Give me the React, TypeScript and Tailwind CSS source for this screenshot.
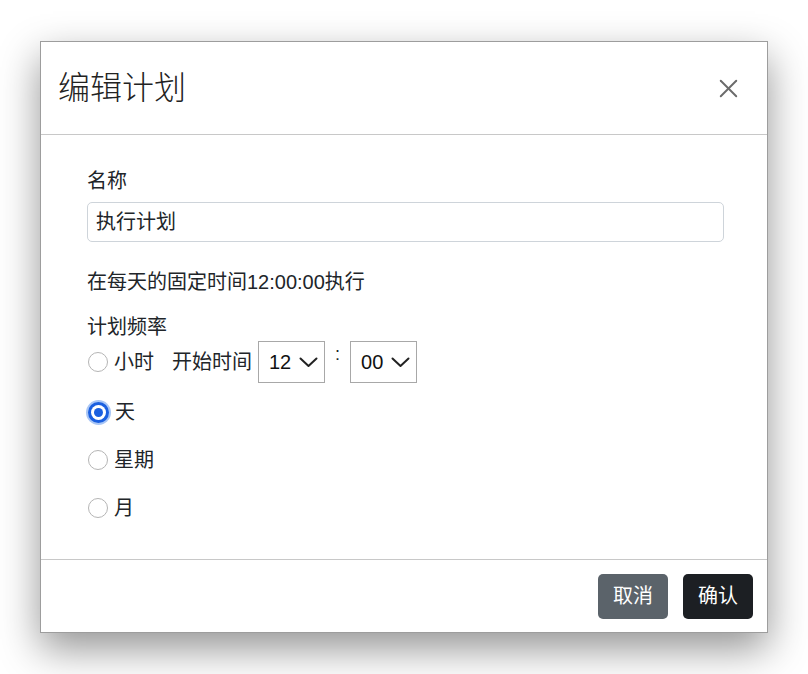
import { X } from "lucide-react";

const font = "font-['Liberation_Sans','Noto_Sans_CJK_SC',sans-serif]";

function Radio({ checked }: { checked?: boolean }) {
  if (checked) {
    return (
      <span className="flex h-[21px] w-[21px] shrink-0 items-center justify-center rounded-full bg-[#1a5fe0] ring-[2px] ring-[#a9c6f5]">
        <span className="flex h-[15px] w-[15px] items-center justify-center rounded-full bg-white">
          <span className="h-[9px] w-[9px] rounded-full bg-[#1a5fe0]" />
        </span>
      </span>
    );
  }
  return (
    <span className="h-[20px] w-[20px] shrink-0 rounded-full border border-[#b5b5b5] bg-white" />
  );
}

function Chevron() {
  return (
    <svg width="19" height="11" viewBox="0 0 19 11" fill="none">
      <polyline
        points="1.5,1.5 9.5,9 17.5,1.5"
        stroke="#222"
        strokeWidth="2"
        strokeLinecap="round"
        strokeLinejoin="round"
      />
    </svg>
  );
}

function TimeSelect({ value }: { value: string }) {
  return (
    <div className="flex h-[42px] w-[67px] items-center justify-between border border-[#a8a8a8] bg-white pl-[10px] pr-[6px] text-[20px] text-[#111]">
      <span>{value}</span>
      <Chevron />
    </div>
  );
}

function OptionRow({ label, checked }: { label: string; checked?: boolean }) {
  return (
    <div className="flex h-[48px] items-center gap-[5px] pl-[1px]">
      <Radio checked={checked} />
      <span className="ml-[1px]">{label}</span>
    </div>
  );
}

export default function App() {
  return (
    <div className={`min-h-[674px] w-[808px] bg-white pl-[40px] pt-[41px] ${font}`}>
      <div className="flex w-[728px] flex-col border border-[#9d9d9d] bg-white text-[20px] text-[#212529] shadow-[0_16px_38px_rgba(0,0,0,0.42)]">
        {/* header */}
        <div className="flex h-[93px] items-center justify-between border-b border-[#c8c8c8] pl-[17px] pr-[23px]">
          <h1 className="text-[32px] font-light leading-none text-[#222]">编辑计划</h1>
          <X size={31} strokeWidth={1.5} color="#6b6b6b" />
        </div>

        {/* body */}
        <div className="flex flex-col pl-[46px] pr-[43px] pt-[32px] pb-[27px]">
          <label className="leading-[28px]">名称</label>
          <div className="mt-[7px] flex h-[40px] items-center rounded-[5px] border border-[#ced4da] px-[8px]">
            执行计划
          </div>
          <p className="mt-[26px] leading-[28px]">在每天的固定时间12:00:00执行</p>
          <p className="mt-[17px] leading-[28px]">计划频率</p>
          <div className="flex h-[42px] items-center pl-[1px]">
            <Radio />
            <span className="ml-[6px]">小时</span>
            <span className="ml-[18px]">开始时间</span>
            <div className="ml-[6px]">
              <TimeSelect value="12" />
            </div>
            <span className="mx-[10px] -translate-y-[8px] text-[18px]">:</span>
            <TimeSelect value="00" />
          </div>
          <div className="mt-[5px] flex flex-col">
            <OptionRow label="天" checked />
            <OptionRow label="星期" />
            <OptionRow label="月" />
          </div>
        </div>

        {/* footer */}
        <div className="flex h-[73px] items-center justify-end gap-[15px] border-t border-[#c8c8c8] pr-[14px]">
          <button className="h-[45px] w-[70px] rounded-[5px] bg-[#5b636a] text-white">取消</button>
          <button className="h-[45px] w-[70px] rounded-[5px] bg-[#1c1f23] text-white">确认</button>
        </div>
      </div>
    </div>
  );
}
